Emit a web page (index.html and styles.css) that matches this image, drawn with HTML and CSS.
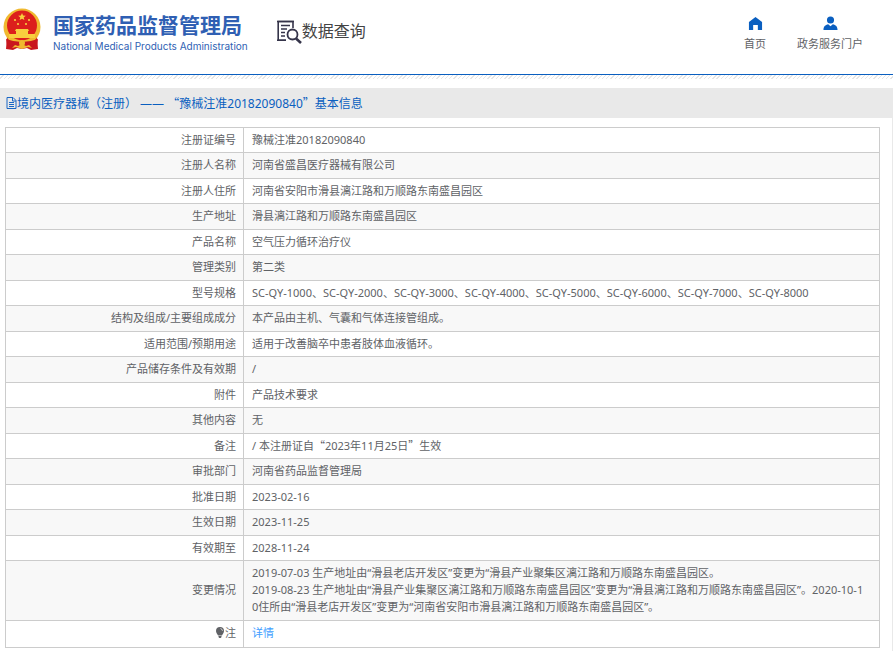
FILE: index.html
```html
<!DOCTYPE html>
<html lang="zh-CN">

<head>
    <meta charset="UTF-8">
    <meta name="viewport" content="width=device-width, initial-scale=1.0">
    <title>数据查询</title>
    <link rel="stylesheet" href="styles.css">
</head>

<body>
    <header class="header">
        <a class="logo" href="#">
            <svg class="emblem" viewBox="0 0 40 44">
                <path d="M5 29L4 41l7 1 4-2 5 1 5-1 4 2 7-1-1-12z" fill="#c9171e" />
                <circle cx="20" cy="19" r="18.500" fill="#f0b92f" />
                <circle cx="20" cy="17.500" r="15" fill="#dc1f1c" />
                <path d="M20 5l1.100 2.500 2.700.2-2.100 1.800.7 2.600-2.400-1.400-2.400 1.400.7-2.600-2.100-1.800 2.700-.2z" fill="#f8cf3e" />
                <g fill="#f8cf3e">
                    <circle cx="13" cy="12" r="1.100" />
                    <circle cx="16" cy="16" r="1.100" />
                    <circle cx="24" cy="16" r="1.100" />
                    <circle cx="27" cy="12" r="1.100" />
                    <path d="M14 21h12l1 2h-1v3h7v4H7v-4h7v-3h-1z" />
                </g>
                <path d="M4 31q16 6 32 0l-1 6q-15 5-30 0z" fill="#c9171e" />
                <path d="M10 40l3-3 3 1 4-2 4 2 3-1 3 3-4-1-6 2-6-2z" fill="#f0b92f" />
                <circle cx="20" cy="35" r="3" fill="#f0b92f" />
            </svg>
            <span class="logo-text">
                <span class="logo-cn">国家药品监督管理局</span>
                <span class="logo-en">National Medical Products Administration</span>
            </span>
        </a>
        <a class="query" href="#">
            <svg class="query-icon" viewBox="0 0 25 24" fill="none" stroke="#35344a">
                <path d="M9 20.200H1.200V1.500H16V8" stroke-width="1.600" />
                <path d="M0 1.500H17M0 20.200H9" stroke-width="1.600" />
                <path d="M4 5.500H13M4 9H10M4 12.500H8M4 16H8" stroke-width="1.300" />
                <circle cx="15.500" cy="14.500" r="5" stroke-width="1.800" />
                <path d="M19 18.500L24 23" stroke-width="2.600" />
            </svg>
            <span>数据查询</span>
        </a>
        <nav class="nav">
            <a href="#">
                <svg viewBox="0 0 16 16" fill="#0a5fc0">
                    <path d="M8 1L1 6.500V15h4.500V9.500h5V15H15V6.500z" />
                </svg>
                <span>首页</span>
            </a>
            <a href="#">
                <svg viewBox="0 0 16 16" fill="#0a5fc0">
                    <circle cx="8" cy="4.200" r="3.800" />
                    <path d="M.5 15c0-4 2-5.500 5-6.200L8 11l2.500-2.200c3 .7 5 2.200 5 6.200z" />
                </svg>
                <span>政务服务门户</span>
            </a>
        </nav>
    </header>

    <main>
        <div class="stripes"></div>
        <div class="content">
            <h1 class="title">
                <svg class="doc-icon" viewBox="0 0 11 12" fill="none" stroke="#1a66c4">
                    <path d="M1 .5H7L10 3.500V11.500H1zM6.500 .5V4H10M3 5.500H8M3 7.500H8M3 9.500H8" />
                </svg>
                <span>境内医疗器械（注册） —— <span class="quote">“</span>豫械注准20182090840<span class="quote">”</span>基本信息</span>
            </h1>

            <table class="info">
                <tr><th scope="row">注册证编号</th><td>豫械注准20182090840</td></tr>
                <tr><th scope="row">注册人名称</th><td>河南省盛昌医疗器械有限公司</td></tr>
                <tr><th scope="row">注册人住所</th><td>河南省安阳市滑县漓江路和万顺路东南盛昌园区</td></tr>
                <tr><th scope="row">生产地址</th><td>滑县漓江路和万顺路东南盛昌园区</td></tr>
                <tr><th scope="row">产品名称</th><td>空气压力循环治疗仪</td></tr>
                <tr><th scope="row">管理类别</th><td>第二类</td></tr>
                <tr><th scope="row">型号规格</th><td>SC-QY-1000、SC-QY-2000、SC-QY-3000、SC-QY-4000、SC-QY-5000、SC-QY-6000、SC-QY-7000、SC-QY-8000</td></tr>
                <tr><th scope="row">结构及组成/主要组成成分</th><td>本产品由主机、气囊和气体连接管组成。</td></tr>
                <tr><th scope="row">适用范围/预期用途</th><td>适用于改善脑卒中患者肢体血液循环。</td></tr>
                <tr><th scope="row">产品储存条件及有效期</th><td>/</td></tr>
                <tr><th scope="row">附件</th><td>产品技术要求</td></tr>
                <tr><th scope="row">其他内容</th><td>无</td></tr>
                <tr><th scope="row">备注</th><td>/ 本注册证自<span class="quote">“</span>2023年11月25日<span class="quote">”</span>生效</td></tr>
                <tr><th scope="row">审批部门</th><td>河南省药品监督管理局</td></tr>
                <tr><th scope="row">批准日期</th><td>2023-02-16</td></tr>
                <tr><th scope="row">生效日期</th><td>2023-11-25</td></tr>
                <tr><th scope="row">有效期至</th><td>2028-11-24</td></tr>
                <tr>
                    <th scope="row">变更情况</th>
                    <td>2019-07-03 生产地址由“滑县老店开发区”变更为“滑县产业聚集区漓江路和万顺路东南盛昌园区。<br>2019-08-23 生产地址由“滑县产业集聚区漓江路和万顺路东南盛昌园区”变更为“滑县漓江路和万顺路东南盛昌园区”。2020-10-10住所由“滑县老店开发区”变更为“河南省安阳市滑县漓江路和万顺路东南盛昌园区”。</td>
                </tr>
                <tr>
                    <th scope="row">
                        <svg class="bulb" viewBox="0 0 8 11" fill="#606266">
                            <path d="M4 0a4 4 0 0 1 4 4c0 2-1.500 3-2 4.500H2C1.500 7 0 6 0 4a4 4 0 0 1 4-4zM2.500 9h3v1l-.7 1H3.200l-.7-1z" />
                            <path d="M4.500 1.500Q6.300 2 6.500 3.800" fill="none" stroke="#fff" stroke-width=".7" />
                        </svg>注
                    </th>
                    <td><a href="#">详情</a></td>
                </tr>
            </table>
        </div>
    </main>
</body>

</html>
```
FILE: styles.css
```css
body {
    margin: 0;
    background: #fff;
    color: #606266;
    font-family: "Noto Sans", "Noto Sans CJK SC", sans-serif;
    font-size: 11px;
    line-height: 17px;
}

a {
    color: #409eff;
    text-decoration: none;
}

/*顶部*/
.header {
    display: flex;
    align-items: flex-start;
    height: 74px;
    border-bottom: 1px solid #0a5fc0;
}

.logo {
    display: flex;
    gap: 11px;
    padding: 8px 0 0 2px;
    color: #2f5fb3;
}

.emblem {
    width: 40px;
    height: 44px;
}

.logo-text {
    display: flex;
    flex-direction: column;
    padding-top: 4px;
    white-space: nowrap;
}

.logo-cn {
    font-size: 21px;
    font-weight: bold;
    line-height: 26px;
}

.logo-en {
    font-family: Inter, Arial, sans-serif;
    font-size: 10px;
    line-height: 16px;
}

.query {
    display: flex;
    padding: 20px 0 0 29px;
    color: #444;
    font-size: 16px;
    line-height: 22px;
    white-space: nowrap;
}

.query-icon {
    width: 25px;
    height: 24px;
}

.nav {
    display: flex;
    gap: 31px;
    margin-left: auto;
    padding: 16px 30px 0 0;
}

.nav a {
    display: flex;
    flex-direction: column;
    align-items: center;
    gap: 4px;
    color: #606266;
}

.nav svg {
    width: 15px;
    height: 15px;
}

/*顶部下方斜纹*/
.stripes {
    height: 4px;
    background: repeating-linear-gradient(135deg, #fff 0 2px, #e6e6e6 2px 3px);
}

.content {
    margin-top: 9px;
    padding-bottom: 3px;
    border-right: 1px solid #e9e9e9;
}

/*标题*/
.title {
    display: flex;
    align-items: center;
    height: 30px;
    margin: 0 0 9px;
    padding-left: 6px;
    background: #e9e9e9;
    color: #0a5fc0;
    font-size: 12px;
    font-weight: normal;
}

.doc-icon {
    width: 11px;
    height: 12px;
}

.quote {
    font-family: "Noto Sans CJK SC", sans-serif;
}

/*信息表格*/
.info {
    width: calc(100% - 17px);
    margin-left: 5px;
    border-collapse: collapse;
    table-layout: fixed;
}

.info th,
.info td {
    padding: 3px 14px 4px 8px;
    border: 1px solid #ccc;
    word-break: break-all;
}

.info th {
    width: 222px;
    padding-right: 7px;
    font-weight: normal;
    text-align: right;
}

.info tr:nth-child(even) {
    background: #f8f8f8;
}

.info tr:nth-child(even) > * {
    padding-bottom: 5px;
}

.info tr:last-child > * {
    padding-bottom: 6px;
}

.bulb {
    width: 8px;
    height: 11px;
    margin-right: 1px;
    vertical-align: -1px;
}
```
